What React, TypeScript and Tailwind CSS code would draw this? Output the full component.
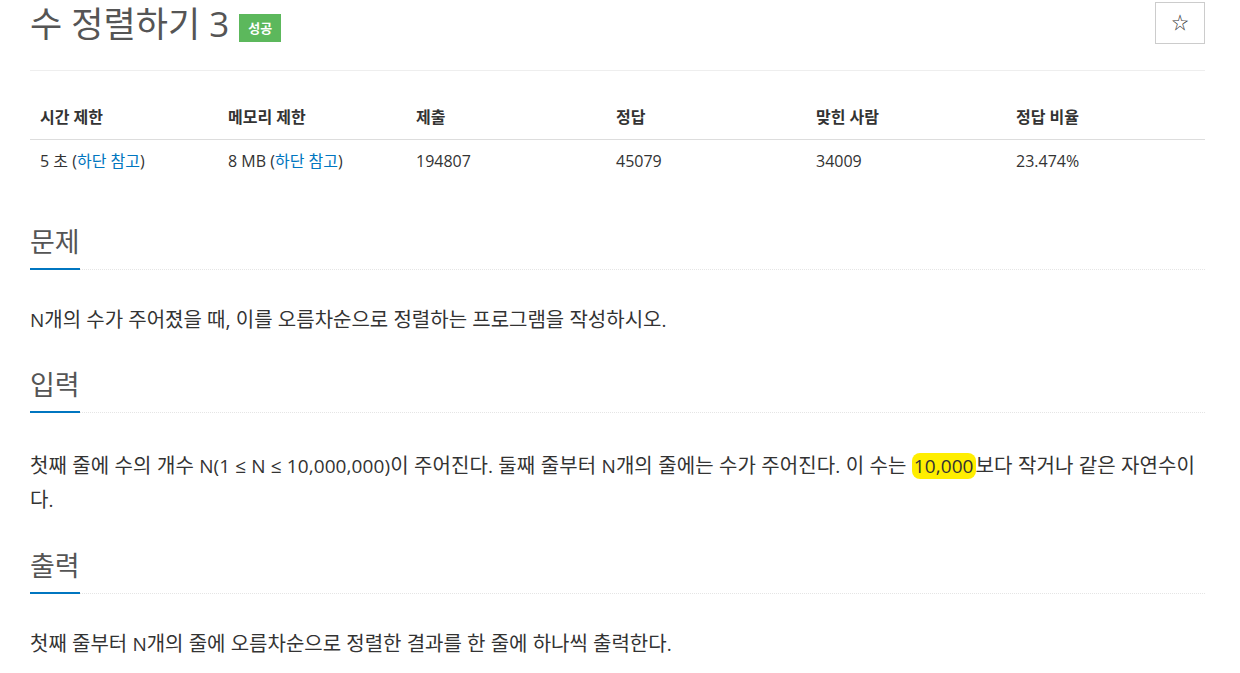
import React from 'react';

const font = { fontFamily: '"Open Sans", "Noto Sans CJK KR", sans-serif' };

const stats = [
  { label: '시간 제한', value: '5 초', link: true, w: 'w-[188px]' },
  { label: '메모리 제한', value: '8 MB', link: true, w: 'w-[188px]' },
  { label: '제출', value: '194807', w: 'w-[200px]' },
  { label: '정답', value: '45079', w: 'w-[200px]' },
  { label: '맞힌 사람', value: '34009', w: 'w-[200px]' },
  { label: '정답 비율', value: '23.474%', w: 'flex-1' },
];

function Headline({ children }: { children: React.ReactNode }) {
  return (
    <div className="flex border-b border-dotted border-[#e5e5e5]">
      <h2 className="text-[27px] leading-[36px] text-[#555] font-normal pb-[8px] border-b-[2px] border-[#0076c0] -mb-px">
        {children}
      </h2>
    </div>
  );
}

// latin runs are a bit smaller than the hangul around them
const L = ({ children }: { children: React.ReactNode }) => <span className="text-[19px]">{children}</span>;

export default function App() {
  return (
    <div className="bg-white min-h-screen px-[30px] text-[#333]" style={font}>
      <div className="w-[1175px]">
        {/* title */}
        <div className="flex items-start justify-between pt-[2px] h-[71px] border-b border-[#eee]">
          <div className="flex items-center gap-[10px] pt-[2px]">
            <h1 className="text-[35px] leading-[40px] text-[#555] font-normal">수 정렬하기 3</h1>
            <span className="bg-[#5cb85c] text-white text-[13px] font-bold px-[9px] h-[28px] leading-[28px] mt-[8px]">성공</span>
          </div>
          <button className="w-[50px] h-[42px] border border-[#ccc] flex items-center justify-center text-[17px] text-[#333]">
            ☆
          </button>
        </div>

        {/* stats table */}
        <div className="mt-[24px] text-[16px]">
          <div className="flex h-[45px] items-center border-b border-[#ddd]">
            {stats.map((s) => (
              <div key={s.label} className={`${s.w} px-[10px] font-bold`}>{s.label}</div>
            ))}
          </div>
          <div className="flex h-[42px] items-center">
            {stats.map((s) => (
              <div key={s.label} className={`${s.w} px-[10px]`}>
                {s.value}
                {s.link && (
                  <>
                    {' '}(<span className="text-[#0076c0]">하단 참고</span>)
                  </>
                )}
              </div>
            ))}
          </div>
        </div>

        {/* 문제 */}
        <section className="mt-[42px]">
          <Headline>문제</Headline>
          <p className="text-[20px] leading-[33px] mt-[33px]">
            <L>N</L>개의 수가 주어졌을 때, 이를 오름차순으로 정렬하는 프로그램을 작성하시오<L>.</L>
          </p>
        </section>

        {/* 입력 */}
        <section className="mt-[30px]">
          <Headline>입력</Headline>
          <p className="text-[20px] leading-[33px] mt-[36px] tracking-[0.1px]">
            첫째 줄에 수의 개수 <L>N(1 ≤ N ≤ 10,000,000)</L>이 주어진다<L>.</L> 둘째 줄부터 <L>N</L>개의 줄에는 수가 주어진다<L>.</L> 이 수는{' '}
            <mark className="bg-[#ffee00] text-[#333] rounded-[8px] px-[2px] text-[19px]">10,000</mark>보다 작거나 같은 자연수이다<L>.</L>
          </p>
        </section>

        {/* 출력 */}
        <section className="mt-[31px]">
          <Headline>출력</Headline>
          <p className="text-[20px] leading-[33px] mt-[33px]">
            첫째 줄부터 <L>N</L>개의 줄에 오름차순으로 정렬한 결과를 한 줄에 하나씩 출력한다<L>.</L>
          </p>
        </section>
      </div>
    </div>
  );
}
